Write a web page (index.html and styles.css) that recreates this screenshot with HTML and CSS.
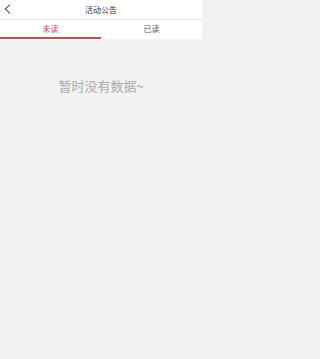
FILE: index.html
```html
<!DOCTYPE html>
<html lang="zh">
<head>
<meta charset="utf-8">
<meta name="viewport" content="width=device-width, initial-scale=1">
<link rel="stylesheet" href="styles.css">
</head>
<body>
<div class="page">
  <header class="topbar">
    <span class="back">
      <svg width="7" height="10" viewBox="0 0 7 10"><path d="M6 0.7 L1.3 5 L6 9.3" fill="none" stroke="#555" stroke-width="1.1"/></svg>
    </span>
    <span class="title">活动公告</span>
  </header>
  <nav class="tabs">
    <div class="tab active">未读</div>
    <div class="tab">已读</div>
  </nav>
  <main class="content">
    <p class="empty">暂时没有数据~</p>
  </main>
</div>
</body>
</html>
```
FILE: styles.css
```css
html, body { margin: 0; padding: 0; }
body { font-family: "Noto Sans CJK SC", "Noto Sans", sans-serif; background: #f2f2f2; }
.page { display: flex; flex-direction: column; width: 202px; min-height: 359px; }
.topbar {
  position: relative;
  height: 19px;
  background: #fff;
  border-bottom: 1px solid #e6e6e6;
  display: flex;
  align-items: center;
  justify-content: center;
}
.back { position: absolute; left: 4px; top: 4px; display: flex; }
.title { font-size: 8px; color: #333; line-height: 1; }
.tabs { display: flex; background: #fff; height: 19px; }
.tab {
  flex: 1;
  display: flex;
  align-items: center;
  justify-content: center;
  font-size: 8px;
  color: #555;
  box-sizing: border-box;
  border-bottom: 2px solid transparent;
}
.tab.active { color: #c0494a; border-bottom-color: #b85556; }
.content { flex: 1; background: #f2f2f2; display: flex; justify-content: center; }
.empty { margin: 39px 0 0; font-size: 13px; line-height: 16px; color: #aaaaaa; }
```
